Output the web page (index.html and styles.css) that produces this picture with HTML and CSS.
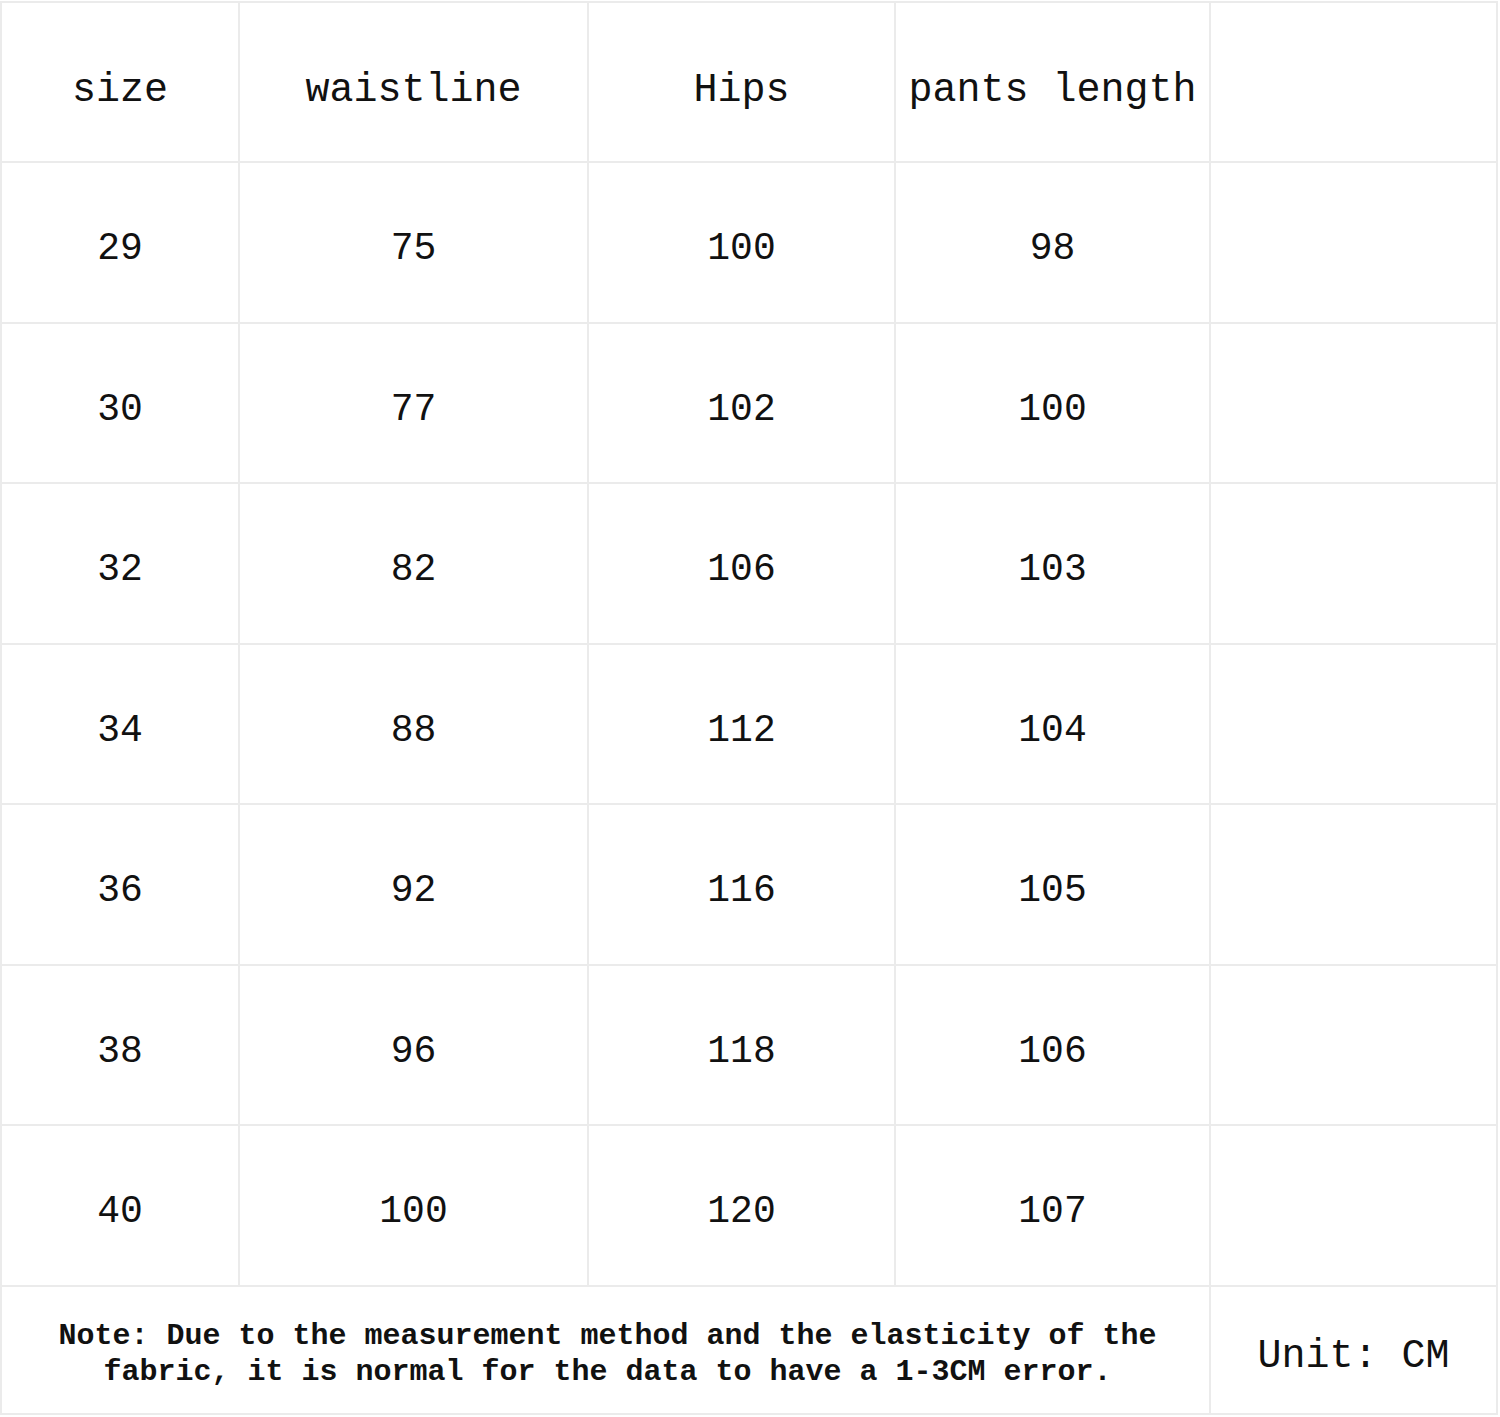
FILE: index.html
```html
<!DOCTYPE html>
<html>
<head>
<meta charset="utf-8">
<link rel="stylesheet" href="styles.css">
</head>
<body>
<div class="chart">
  <div class="cell head">size</div>
  <div class="cell head">waistline</div>
  <div class="cell head">Hips</div>
  <div class="cell head">pants length</div>
  <div class="cell"></div>

  <div class="cell">29</div><div class="cell">75</div><div class="cell">100</div><div class="cell">98</div><div class="cell"></div>
  <div class="cell">30</div><div class="cell">77</div><div class="cell">102</div><div class="cell">100</div><div class="cell"></div>
  <div class="cell">32</div><div class="cell">82</div><div class="cell">106</div><div class="cell">103</div><div class="cell"></div>
  <div class="cell">34</div><div class="cell">88</div><div class="cell">112</div><div class="cell">104</div><div class="cell"></div>
  <div class="cell">36</div><div class="cell">92</div><div class="cell">116</div><div class="cell">105</div><div class="cell"></div>
  <div class="cell">38</div><div class="cell">96</div><div class="cell">118</div><div class="cell">106</div><div class="cell"></div>
  <div class="cell">40</div><div class="cell">100</div><div class="cell">120</div><div class="cell">107</div><div class="cell"></div>

  <div class="cell note">Note: Due to the measurement method and the elasticity of the<br>fabric, it is normal for the data to have a 1-3CM error.</div>
  <div class="cell unit">Unit: CM</div>
</div>
</body>
</html>
```

FILE: styles.css
```css
html, body {
  margin: 0;
  padding: 0;
  background: #ffffff;
}

.chart {
  margin-top: 1px;
  width: 1498px;
  display: grid;
  grid-template-columns: 238px 349px 307px 315px 287px;
  grid-template-rows: 160px 161px 160px 161px 160px 161px 160px 161px 128px;
  border-top: 2px solid #ebebeb;
  border-left: 2px solid #ebebeb;
  box-sizing: border-box;
  font-family: "Liberation Mono", "DejaVu Sans Mono", monospace;
  color: #111111;
}

.cell {
  box-sizing: border-box;
  border-right: 2px solid #ebebeb;
  border-bottom: 2px solid #ebebeb;
  display: flex;
  align-items: center;
  justify-content: center;
  font-size: 38px;
  padding-top: 12px;
  white-space: nowrap;
}

.head {
  font-size: 40px;
  padding-top: 16px;
}

.note {
  grid-column: 1 / span 4;
  font-size: 30px;
  font-weight: bold;
  text-align: center;
  line-height: 36px;
  padding-top: 8px;
  padding-left: 4px;
}

.unit {
  font-size: 40px;
  padding-top: 12px;
}
```
